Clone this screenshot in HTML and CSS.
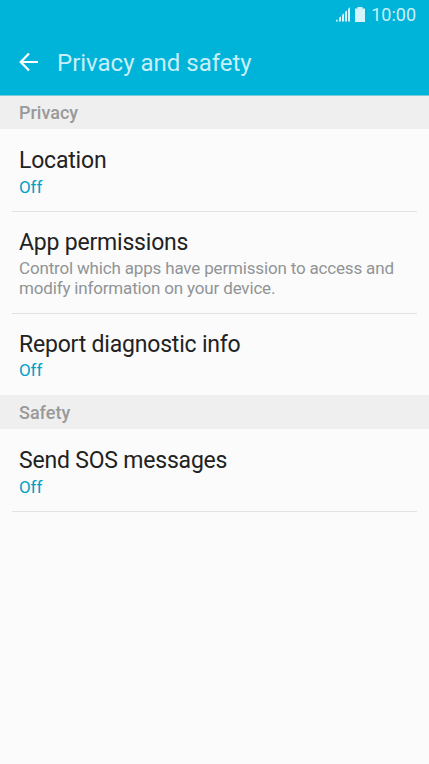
FILE: index.html
```html
<!DOCTYPE html>
<html lang="en">
<head>
<meta charset="utf-8">
<title>Privacy and safety</title>
<link rel="stylesheet" href="styles.css">
</head>
<body>
<header class="top">
  <div class="status">
    <svg class="signal" width="15" height="15" viewBox="0 0 15 15"><path d="M0 12.700h1.700v1.800H0zM3 10.700l2-1.400v5.200H3zM6 8l2-1.800v8.300H6zM9 5l2-1.700v11.200H9zM12 2l2-1.700v14.200h-2z"/></svg>
    <svg class="battery" width="10" height="15" viewBox="0 0 10 15"><path d="M2.500 0h5v1.500H10V15H0V1.500h2.500z"/></svg>
    <span class="clock">10:00</span>
  </div>
  <div class="bar">
    <svg class="back" width="20" height="20" viewBox="0 0 20 20"><path d="M19 10H2M10 1.500L1.700 10L10 18.500"/></svg>
    <h1 class="title">Privacy and safety</h1>
  </div>
</header>
<main>
  <h2 class="section">Privacy</h2>
  <div class="item"><div class="name">Location</div><div class="value">Off</div></div>
  <div class="item tall"><div class="name">App permissions</div><div class="note">Control which apps have permission to access and<br>modify information on your device.</div></div>
  <div class="item last"><div class="name">Report diagnostic info</div><div class="value">Off</div></div>
  <h2 class="section safety">Safety</h2>
  <div class="item"><div class="name">Send SOS messages</div><div class="value">Off</div></div>
</main>
</body>
</html>
```
FILE: styles.css
```css
* { box-sizing: border-box; }
body { margin: 0; height: 764px; background: #fbfbfb; font-family: Roboto, sans-serif; overflow: hidden; }
.top { height: 96px; background: #00b3d9; color: #c8eff8; border-bottom: 1px solid #7ccbdd; }
.status { height: 30px; display: flex; justify-content: flex-end; align-items: center; padding-right: 13px; }
.signal, .battery { fill: #d5f3fa; }
.signal { margin-bottom: 1px; }
.battery { margin: 0 6px 1px 4px; }
.clock { font-size: 18px; line-height: 30px; }
.bar { height: 64px; display: flex; align-items: center; padding-left: 19px; }
.back { fill: none; stroke: #fff; stroke-width: 2.2; }
.title { margin: 2px 0 0 18px; font-size: 24px; line-height: 28px; font-weight: 400; }
.section { margin: 0; height: 33px; padding-left: 19px; background: #efefef; color: #999; font-size: 18px; line-height: 34px; font-weight: 500; }
.safety { height: 34px; line-height: 36px; }
.item { height: 83px; margin: 0 12px; padding: 17px 7px 0; border-bottom: 1px solid #e3e3e3; }
.tall { height: 102px; padding-top: 16px; }
.last { height: 81px; padding-top: 16px; border-bottom: 0; }
.last .value { line-height: 20px; }
.name { color: #222; font-size: 23px; line-height: 30px; letter-spacing: -0.2px; }
.value { color: #00a0c6; font-size: 17px; line-height: 22px; letter-spacing: -0.1px; }
.note { color: #909496; font-size: 17px; line-height: 20px; letter-spacing: -0.17px; white-space: nowrap; }
```
